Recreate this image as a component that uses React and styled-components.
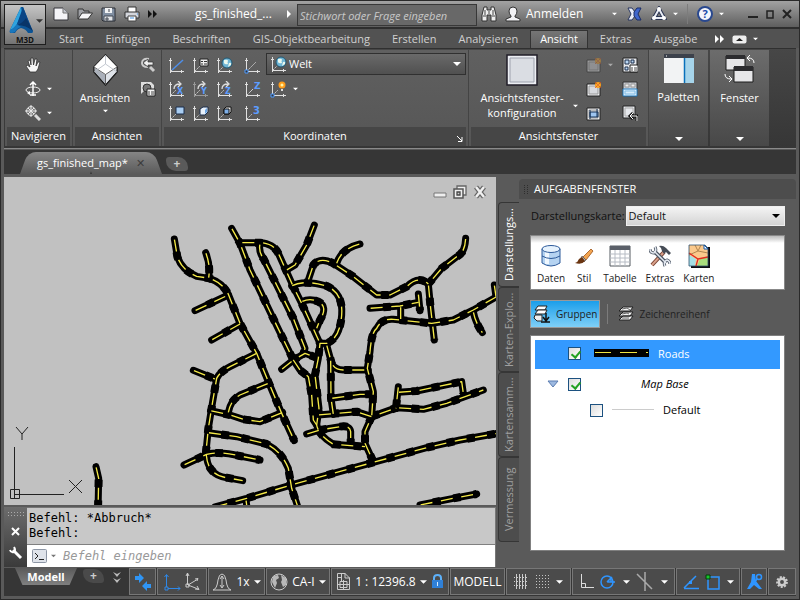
import * as React from 'react';
import styled, { createGlobalStyle, css } from 'styled-components';

const GlobalStyle = createGlobalStyle`
    * { box-sizing: border-box; }
    body {
        margin: 0;
        background: #5a5a5a;
        font-family: "Open Sans", "Noto Sans", sans-serif;
        font-size: 11px;
        line-height: 16px;
        color: #fff;
    }
    button, input, select { font: inherit; color: inherit; }
    svg { display: block; flex: none; }
`;

/* ---------- small icons ---------- */

const Icon = ({w = 16, h = 16, box, children}) => (
    <svg width={w} height={h} viewBox={box || `0 0 ${w} ${h}`} fill="none" aria-hidden="true">{children}</svg>
);

const Arrow = ({w = 7, color = '#fff'}) => (
    <Icon w={w} h={4} box="0 0 8 4"><path d="M0 0H8L4 4Z" fill={color}/></Icon>
);

const DoubleArrow = ({color = '#fff'}) => (
    <Icon w={9} h={8}><path d="M0 0L4 4L0 8ZM5 0L9 4L5 8Z" fill={color}/></Icon>
);

const LogoIcon = () => (
    <Icon w={25} h={27}>
        <path d="M12 0L1 23Q0 26 2 26L6 26Q8 22 12 21Q17 22 19 26L23 26Q25 25 23 22L14 0Z" fill="#0b5496"/>
        <path d="M12 0L1 23Q5 22 8 17L13 6Z" fill="#2fa3df"/>
        <path d="M13 3L8 17Q14 15 23 23L14 0Z" fill="#0a4585"/>
        <path d="M8 17Q4 22 1 23Q0 26 3 26L6 25Q8 21 12 20Z" fill="#1877bd"/>
        <path d="M17 11L24 24Q17 18 8 18Q14 16 17 11Z" fill="#083569"/>
    </Icon>
);

const NewIcon = () => (
    <Icon><path d="M1 2H10L15 7V14H1Z" fill="#f4f4f8" stroke="#35353b"/><path d="M10 2V7H15" fill="#c4c7d0" stroke="#777"/></Icon>
);
const OpenIcon = () => (
    <Icon><path d="M1 13V3H6L7 5H12V7" fill="#9fa1a6" stroke="#333"/><path d="M1 13L5 7H15.500L11 13Z" fill="#f5f5f7" stroke="#333"/></Icon>
);
const SaveIcon = () => (
    <Icon w={15} h={15}><path d="M1 1H14V14H2L1 13Z" fill="#8290a3" stroke="#2a2d33"/><path d="M4 1H11V6H4Z" fill="#f2f3f5"/><path d="M3 9H12V14H3Z" fill="#e4e6ea" stroke="#404650"/><path d="M8 2V5M5 11H7V13H5Z" stroke="#404650"/></Icon>
);
const PrintIcon = () => (
    <Icon><path d="M4 6V1H12V6" fill="#fff" stroke="#333"/><path d="M1 6H15V12H1Z" fill="#d4d6dc" stroke="#333"/><path d="M4 10H12V15H4Z" fill="#fff" stroke="#444"/><path d="M6 12H10M13 8H14" stroke="#3f8fe0"/></Icon>
);
const BinocularIcon = () => (
    <Icon><path d="M3 1H6V4H10V1H13L15 9V15H10V9H6V15H1V9Z" fill="#eee" stroke="#333"/><path d="M2 10H5M11 10H14M4 4V9M12 4V9M8 5V8" stroke="#444"/></Icon>
);
const UserIcon = () => (
    <Icon><path d="M8 1Q12 1 12 5Q12 8 10 10V11L15 13V15H1V13L6 11V10Q4 8 4 5Q4 1 8 1Z" fill="#f1f1f4" stroke="#333"/></Icon>
);
const ExchangeIcon = () => (
    <Icon w={15} h={14}><path d="M1 1H5L8 5V9L5 13H1L4 7Z" fill="#e9edf8" stroke="#27355f"/><path d="M14 1H10L7 5V9L10 13H14L11 7Z" fill="#3f66cc" stroke="#1b2c66"/></Icon>
);
const AppsIcon = () => (
    <Icon><path d="M8 3L3 12H13Z" stroke="#2b3552" strokeWidth="4"/><path d="M8 3L3 12H13Z" stroke="#e8ecf5" strokeWidth="2"/><circle cx="8" cy="3" r="2" fill="#fff"/><circle cx="3" cy="12" r="2" fill="#fff"/><circle cx="13" cy="12" r="2" fill="#fff"/></Icon>
);

const HandIcon = () => (
    <Icon><path d="M5 15L1 9L2 8L5 10L3 4L5 3L6 8L6 1L8 1L8.500 8L10 2L12 2L11 9L13 5L15 5L13 12L11 15Z" fill="#f6f6f6" stroke="#333" strokeWidth=".8"/></Icon>
);
const OrbitIcon = () => (
    <Icon><ellipse cx="8" cy="9" rx="7" ry="3" stroke="#eee"/><path d="M8 15V2M5 4L8 1L11 4M5 14H11" stroke="#fff" strokeWidth="1.500"/><path d="M2 12L5 10V14Z" fill="#fff"/></Icon>
);
const ZoomIcon = () => (
    <Icon><circle cx="6" cy="6" r="4.500" fill="#777" stroke="#ddd"/><path d="M6 0V12M0 6H12M3 3L9 9M9 3L3 9" stroke="#e9e9e9"/><path d="M10 10L15 15" stroke="#ddd" strokeWidth="3"/></Icon>
);
const CubeIcon = () => (
    <Icon w={25} h={32}>
        <path d="M12.500 1L24 13V18L12.500 31L1 18V13Z" fill="#f0f2f5" stroke="#1d1d1d" strokeWidth="1.500"/>
        <path d="M12.500 1L24 13L12.500 20L1 13Z" fill="#fff"/>
        <path d="M1.500 14L12.500 21V30L2 18Z" fill="#aab0ba"/>
        <path d="M23.500 14L12.500 21V30L23 18Z" fill="#dfe3e9"/>
        <path d="M1 13L12.500 20.500L24 13M12.500 20.500V31" stroke="#555" strokeWidth=".9"/>
        <path d="M12.500 1V10L1 18M12.500 10L24 18" stroke="#b4bac4" strokeWidth=".8"/>
    </Icon>
);
const BackZoomIcon = () => (
    <Icon><path d="M9 2Q2 1 2 6Q2 10 8 10" stroke="#ccc" strokeWidth="2"/><path d="M3 6L8 2V5H13V8H8V10Z" fill="#f2f2f2" stroke="#333" strokeWidth=".7"/><path d="M10 10L14 14" stroke="#ccc" strokeWidth="3"/></Icon>
);
const ViewManagerIcon = () => (
    <Icon><path d="M1 1H11L14 4V9H5L1 13Z" fill="#ddd"/><circle cx="7" cy="7" r="4" fill="#777" stroke="#333"/><path d="M7 8H15V15H7Z" fill="#f5f5f5" stroke="#222"/><path d="M8 11H10M11 11H14M8 13H10M11 13H14" stroke="#444"/></Icon>
);

const Axis = ({children, dim}) => (
    <Icon w={17} h={17}>
        <g stroke={dim ? '#999' : '#e0e0e0'} shapeRendering="crispEdges">
            <path d="M2.500 16V1M2 14.500H16"/><path d="M1 3.500H4M13.500 13V16"/>
        </g>
        <path d="M3 14L8 9" stroke="#ccc" strokeDasharray="2 1"/>
        {children}
    </Icon>
);
const Globe = ({x = 11, y = 6}) => (
    <g><circle cx={x} cy={y} r="5" fill="#6fb5d5" stroke="#21566f"/><path d={`M${x - 3} ${y - 3}q4 -1 4 1q-1 1 0 3q-3 1 -4 -1zM${x + 2} ${y}q3 -1 2 2l-3 2z`} fill="#eaf8ee"/></g>
);
const AxisLetter = ({children}) => (
    <text x="9" y="13" fill="#5c9dff" fontSize="8" fontWeight="bold" fontFamily="DejaVu Sans">{children}</text>
);
const Turn = () => <path d="M6 8Q6 3 12 3M10 0L13 3L10 6" stroke="#ddd" strokeWidth="1.300"/>;

const coordIcons = [
    ['BKS', <Axis><path d="M4 13L15 3" stroke="#4e8ee8" strokeWidth="1.500"/></Axis>],
    ['BKS benannt', <Axis><path d="M8 2H16V9H8Z" fill="#eee" stroke="#222"/><path d="M9 4.500H11M12 4.500H15M9 7H11M12 7H15" stroke="#333"/></Axis>],
    ['BKS Welt', <Axis><Globe/></Axis>],
    ['BKS Ursprung', <Axis><path d="M7 10L12 5" stroke="#aaa"/><path d="M1 13H4V16H1Z" fill="#333" stroke="#4e9bff"/></Axis>],
    ['BKS X', <Axis><Turn/><AxisLetter>X</AxisLetter></Axis>],
    ['BKS Y', <Axis dim><Turn/><AxisLetter>Y</AxisLetter></Axis>],
    ['BKS Z', <Axis><Turn/><AxisLetter>Z</AxisLetter></Axis>],
    ['Z-Achse', <Axis><path d="M6 11L9 8" stroke="#ccc"/><text x="10" y="8" fill="#5c9dff" fontSize="9" fontWeight="bold" fontFamily="DejaVu Sans">Z</text></Axis>],
    ['BKS Ansicht', <Axis><path d="M8 2H16V9H8Z" fill="#a9cdf2" stroke="#1a2c4a"/></Axis>],
    ['BKS Objekt', <Axis><path d="M8 4L11 2H16V7L13 10H8Z" fill="#e8f1fb" stroke="#1a2c4a"/><path d="M13 5V9L15 7V3Z" fill="#6ba6e6"/></Axis>],
    ['BKS Fläche', <Axis><path d="M8 4L10 2H15V7L13 9H8Z" fill="#eee" stroke="#111"/><path d="M8 4H13V9H8Z" fill="#7eafe8" stroke="#111"/></Axis>],
    ['BKS 3 Punkte', <Axis><text x="9" y="9" fill="#5c9dff" fontSize="10" fontWeight="bold" fontFamily="DejaVu Sans">3</text></Axis>],
];

const Spark = ({x, y}) => (
    <g><circle cx={x} cy={y} r="3" fill="#f9a01b"/><circle cx={x} cy={y} r="1.300" fill="#fff36b"/><path d={`M${x - 3} ${y - 3}l6 6M${x + 3} ${y - 3}l-6 6`} stroke="#d9441d" strokeWidth=".7"/></g>
);
const ViewportIcon = ({spark, faded, inner}) => (
    <Icon><g opacity={faded ? .4 : 1}><path d="M1 3H14V15H1Z" fill="#f2f3f5" stroke="#222"/><path d="M3 5H12V13H3Z" fill="#d8dade" stroke="#999"/>{inner && <path d="M4 7H12V12H4ZM4 5V14M11 4V12" fill="#9ec5f0" stroke="#153055"/>}{spark && <Spark x={12} y={4}/>}</g></Icon>
);
const NamedViewsIcon = () => (
    <Icon><path d="M1 1H15V15H1Z" fill="#e6e8ec" stroke="#222"/><path d="M3 3H7V7H3ZM9 3H12V6H9ZM3 10H6V13H3Z" fill="#b9d6f4" stroke="#1d2f4a"/><path d="M8 8H16V15H8Z" fill="#fff" stroke="#222"/><path d="M9 11H11M12 11H15M9 13H11M12 13H15" stroke="#444"/></Icon>
);
const JoinIcon = () => (
    <Icon><path d="M1 1H15V15H1Z" fill="#c9ccd2" stroke="#333"/><path d="M3 3H7V6H3ZM9 3H13V6H9Z" fill="#eee" stroke="#999"/><path d="M1 8H15V15H1Z" fill="#d7ecfb" stroke="#2b82c5"/><path d="M3 10H13V13H3Z" stroke="#82bde6"/></Icon>
);
const RestoreIcon = () => (
    <Icon><path d="M1 1H13V13H1Z" fill="#e6e8ec" stroke="#222"/><path d="M3 3H11V11H3Z" stroke="#aaa"/><path d="M15 16V11H9M11 8L8 11L11 14" stroke="#111" strokeWidth="3"/><path d="M15 16V11H9M11 8L8 11L11 14" stroke="#fff"/></Icon>
);
const BigViewportIcon = () => (
    <Icon w={32} h={32}><path d="M1 1H31V31H1Z" fill="#eceef3" stroke="#211e29" strokeWidth="1.500"/><path d="M4 4H28V28H4Z" fill="#dadde3" stroke="#9da1ad"/></Icon>
);
const PalettesIcon = () => (
    <Icon w={30} h={29}><path d="M0 0H30V29H0Z" fill="#f2f3f4"/><path d="M20 3H30V29H20Z" fill="#a6d4ea"/><path d="M20.500 3V29" stroke="#0870bb" strokeWidth="1.500"/><path d="M0 0H30V4H0Z" fill="#3c414b"/><path d="M2 2H3" stroke="#fff"/></Icon>
);
const WindowsIcon = () => (
    <Icon w={32} h={30}><path d="M2 2H21V16H2Z" fill="#e6e6e8" stroke="#1c1c1c"/><path d="M2 1H21V5H2Z" fill="#2c2c2f"/><path d="M10 13H29V28H10Z" fill="#e6e6e8" stroke="#1c1c1c"/><path d="M10 12H29V17H10Z" fill="#2c2c2f"/><path d="M30 9Q30 4 24 4M26 1L23 4L26 7M1 20Q1 25 7 25M5 22L8 25L5 28" stroke="#fff"/></Icon>
);

const DataIcon = () => (
    <Icon w={22} h={24}><path d="M2 5V19Q11 25 20 19V5Z" fill="#b5d3f1" stroke="#2d5a9a"/><path d="M5 6V20H9V7Z" fill="#f0f8ff"/><ellipse cx="11" cy="5" rx="9" ry="3.500" fill="#e6f2fd" stroke="#2d5a9a"/><path d="M2 12Q11 17 20 12" stroke="#2d5a9a"/></Icon>
);
const BrushIcon = () => (
    <Icon w={20} h={24}><path d="M9 13L17 5L19 7L12 16Z" fill="#f3a552" stroke="#9b5216" strokeWidth=".8"/><path d="M8 12L12 16L10 18L7 14Z" fill="#bbb" stroke="#444" strokeWidth=".6"/><path d="M1 19Q4 18 5 15L8 13L11 17Q8 21 1 19Z" fill="#6a3410"/></Icon>
);
const TableIcon = () => (
    <Icon w={22} h={24}><path d="M1 2H21V22H1Z" fill="#fff" stroke="#555a60"/><path d="M1 2H21V6H1Z" fill="#5a5f68"/><path d="M1 10H21M1 14H21M1 18H21M6 6V22M11 6V22M16 6V22" stroke="#b7bcc4"/></Icon>
);
const ToolsIcon = () => (
    <Icon w={22} h={24}><path d="M3 21L15 8" stroke="#7a4433" strokeWidth="4"/><path d="M3 21L15 8" stroke="#d9a08a" strokeWidth="2"/><path d="M10 2Q14 1 17 4L22 9L20 11L17 8L15 10L13 7Q13 4 10 2Z" fill="#454b55"/><path d="M5 7L17 19" stroke="#4b5563" strokeWidth="4"/><path d="M1 5Q1 9 5 9Q8 7 6 3M16 22Q14 18 18 16Q21 17 21 20" stroke="#4b5563" strokeWidth="3"/><path d="M5 7L17 19M1 5Q1 9 5 9Q8 7 6 3M16 22Q14 18 18 16Q21 17 21 20" stroke="#e3e8f0" strokeWidth="1.500"/></Icon>
);
const MapIcon = () => (
    <Icon w={22} h={24}><path d="M3 3H22V24H3Z" fill="#0e0e12"/><path d="M1 1H17L20 4V22H1Z" fill="#fbc98c"/><path d="M1 11L8 15L7 22H1Z" fill="#a5dfe6"/><path d="M12 15L20 12V22H9Z" fill="#a9dd7d"/><path d="M7 1L10 7L1 11M10 7L20 9M13 1L10 7" stroke="#b2864f"/><path d="M1 9L10 15L20 13M10 15L8 22" stroke="#e12b21" strokeWidth="1.300"/><path d="M1 1H17L20 4V22H1Z" stroke="#31506e" strokeWidth=".8"/><path d="M16 1V5H20Z" fill="#fff" stroke="#1458a8"/></Icon>
);
const GroupsIcon = () => (
    <Icon w={18} h={18}><path d="M5 1H14L12 5H2Z" fill="#fff" stroke="#222"/><path d="M5 5H14L12 9H2Z" fill="#fff" stroke="#222"/><path d="M2 10H9V16H4L1 13Z" fill="#eee" stroke="#222"/><path d="M13 8V15M10 12L13 16L16 12M8 17H17" stroke="#111" strokeWidth="1.500"/></Icon>
);
const LayersIcon = () => (
    <Icon><path d="M5 10H15L12 14H1ZM5 6H15L12 10H1ZM5 1H15L12 5H1Z" fill="#f1f1f1" stroke="#222"/><path d="M4 3L9 2L12 4M4 8L9 7L11 8M4 12H11" stroke="#666"/></Icon>
);
const WrenchIcon = () => (
    <Icon w={14} h={14}><path d="M4 4L12 12" stroke="#fff" strokeWidth="3"/><path d="M1 4Q2 7 5 6Q7 4 5 1" stroke="#fff" strokeWidth="2"/></Icon>
);

/* status bar icons */
const SwapIcon = () => (
    <Icon w={18} h={18}><path d="M1 3H5V0L10 5L5 10V7H1ZM17 11H13V8L8 13L13 18V15H17Z" fill="#2f95f5"/></Icon>
);
const UcsIcon = () => (
    <Icon w={18} h={18}><path d="M3.500 14V2M5 15.500H17M1.500 4L3.500 1.500L5.500 4M15 13.500L17 15.500L15 17.500M2 14H5V17H2Z" stroke="#2e88e8"/></Icon>
);
const IsoIcon = () => (
    <Icon w={16} h={19}><path d="M2.500 13V1M3 13L13 7M3 13L13 17M1 4L2.500 1L4 4M10 7L13 6.500L12 9M10 17L14 17.500L12 14M1 12H4V15H1Z" stroke="#ccc"/></Icon>
);
const ScaleIcon = () => (
    <Icon w={20} h={20}><path d="M1 18Q5 17 6 8Q7 2 10 2Q13 2 14 8Q15 17 19 18Z" stroke="#ccc"/><path d="M10 4V15M8 7L10 4L12 7M8 13L10 16L12 13" stroke="#ccc"/></Icon>
);
const WorldIcon = () => (
    <Icon w={18} h={18}><circle cx="9" cy="9" r="8" stroke="#ccc"/><path d="M3 3L8 2L9 5L6 7L7 10L5 15L2 9ZM11 2L16 5L16 12L13 14L11 9L12 7Z" fill="#b8b8b8"/></Icon>
);
const SheetIcon = () => (
    <Icon w={15} h={19}><path d="M1.500 1.500H9L13.500 6V17.500H1.500ZM9 1V6H14M1 5.500H6M5.500 1V10M4 9.500H11V15.500H4ZM7.500 8V17M2 12.500H13" stroke="#ccc"/></Icon>
);
const LockIcon = () => (
    <Icon w={13} h={15}><path d="M3 7V4Q3 1 6.500 1Q10 1 10 4V7" stroke="#5db0f8" strokeWidth="2"/><path d="M1 6H12V14H1Z" fill="#2f80d8"/><path d="M6.500 8V12" stroke="#d5eaff"/></Icon>
);
const GridIcon = () => (
    <Icon w={15} h={15}><path d="M2.500 0V15M5.500 0V15M8.500 0V15M11.500 0V15" stroke="#ccc"/><path d="M0 3.500H15M0 7.500H15M0 11.500H15" stroke="#ccc" strokeDasharray="1 2"/></Icon>
);
const DotsIcon = () => (
    <Icon w={14} h={14}>{[1, 4, 7, 10, 13].map(y => <path key={y} d={`M0 ${y - .5}H14`} stroke="#c4c4c4" strokeDasharray="1 2"/>)}</Icon>
);
const OrthoIcon = () => (
    <Icon w={14} h={15}><path d="M1.500 0V13.500H14M1.500 9.500H5.500V13.500" stroke="#ddd"/></Icon>
);
const PolarIcon = () => (
    <Icon w={16} h={16}><circle cx="7" cy="8" r="6" stroke="#2f95ff" strokeWidth="1.500"/><path d="M7 8L12 3M7 8H15M11 8V5" stroke="#2f95ff" strokeWidth="1.500"/></Icon>
);
const IsoDraftIcon = () => (
    <Icon w={18} h={20}><path d="M1 2L16 17M9 0V19" stroke="#aaa" strokeWidth="1.500"/></Icon>
);
const TrackIcon = () => (
    <Icon w={17} h={16}><path d="M1 14.500H16M1 14L13 2" stroke="#2f95ff" strokeWidth="1.500"/><path d="M6 7H9V10H6Z" fill="#2f95ff"/></Icon>
);
const SnapIcon = () => (
    <Icon w={16} h={16}><path d="M3 3H14V15H3Z" stroke="#2f95ff" strokeWidth="1.500"/><path d="M1 1H5V5H1Z" fill="#17c52b" stroke="#053d08"/></Icon>
);
const AnnoIcon = () => (
    <Icon w={17} h={18}><path d="M6 1L9 1L10 8L16 16L13 16L8 12L4 16L1 16L5 9Z" fill="#2f95ff"/><circle cx="13" cy="4" r="2.500" stroke="#2f95ff" strokeWidth="1.500"/><path d="M11 6L8 10" stroke="#2f95ff" strokeWidth="1.500"/></Icon>
);
const GearIcon = () => (
    <Icon w={12} h={12}><circle cx="6" cy="6" r="4.800" stroke="#ccc" strokeWidth="2.200" strokeDasharray="2 1.300"/><circle cx="6" cy="6" r="3.200" stroke="#ccc" strokeWidth="2.500"/></Icon>
);

/* ---------- title bar and ribbon tabs ---------- */

const TitleBar = ({docName}) => (
    <TitleRow>
        <QuickAccess>
            <IconButton aria-label="Neu"><NewIcon/></IconButton>
            <IconButton aria-label="Öffnen"><OpenIcon/></IconButton>
            <IconButton aria-label="Speichern"><SaveIcon/></IconButton>
            <IconButton aria-label="Drucken"><PrintIcon/></IconButton>
            <IconButton aria-label="Mehr"><DoubleArrow color="#111"/></IconButton>
        </QuickAccess>
        <DocName>{docName}</DocName>
        <Icon w={4} h={8}><path d="M0 0L4 4L0 8Z" fill="#fff"/></Icon>
        <Search type="text" placeholder="Stichwort oder Frage eingeben" aria-label="Suche"/>
        <IconButton aria-label="Suchen"><BinocularIcon/></IconButton>
        <SignIn><UserIcon/><span>Anmelden</span><Arrow w={5}/></SignIn>
        <TitleTools>
            <IconButton aria-label="Exchange"><ExchangeIcon/></IconButton>
            <IconButton aria-label="Apps"><AppsIcon/><Arrow w={5}/></IconButton>
            <Divider/>
            <IconButton aria-label="Hilfe"><HelpMark>?</HelpMark><Arrow w={5}/></IconButton>
        </TitleTools>
        <WindowButtons>
            <IconButton aria-label="Minimieren"><Icon w={10} h={10}><path d="M0 8H10" stroke="#222" strokeWidth="2"/></Icon></IconButton>
            <IconButton aria-label="Maximieren"><Icon w={8} h={10}><path d="M1 2H7V9H1Z" stroke="#222" strokeWidth="1.500"/></Icon></IconButton>
            <IconButton aria-label="Schließen"><Icon w={10} h={10}><path d="M1 1L9 9M9 1L1 9" stroke="#222" strokeWidth="2"/></Icon></IconButton>
        </WindowButtons>
    </TitleRow>
);

const ribbonTabs = ['Start', 'Einfügen', 'Beschriften', 'GIS-Objektbearbeitung', 'Erstellen', 'Analysieren', 'Ansicht', 'Extras', 'Ausgabe'];

const RibbonTabs = ({active, onPick}) => (
    <TabRow>
        {ribbonTabs.map(name => (
            <RibbonTab key={name} $active={name === active} onClick={() => onPick(name)}>{name}</RibbonTab>
        ))}
        <IconButton aria-label="Weitere Register"><DoubleArrow/></IconButton>
        <IconButton aria-label="Ribbon minimieren">
            <Icon w={15} h={9}><rect x=".5" y=".5" width="14" height="8" rx="2" fill="#eee"/><path d="M4 6H11L7.500 3Z" fill="#222"/></Icon>
            <Arrow w={5}/>
        </IconButton>
    </TabRow>
);

/* ---------- ribbon ---------- */

const Ribbon = () => (
    <RibbonBar>
        <Panel $width={68}>
            <PanelBody>
                <ToolColumn>
                    <IconButton aria-label="Pan"><HandIcon/></IconButton>
                    <IconButton aria-label="Orbit"><OrbitIcon/><Arrow w={5}/></IconButton>
                    <IconButton aria-label="Zoom"><ZoomIcon/><Arrow w={5}/></IconButton>
                </ToolColumn>
            </PanelBody>
            <PanelTitle>Navigieren</PanelTitle>
        </Panel>
        <Panel $width={89}>
            <PanelBody>
                <BigButton><CubeIcon/><span>Ansichten</span><Arrow w={5}/></BigButton>
                <ToolColumn>
                    <IconButton aria-label="Vorherige Ansicht"><BackZoomIcon/></IconButton>
                    <IconButton aria-label="Ausschnitt"><ViewManagerIcon/></IconButton>
                </ToolColumn>
            </PanelBody>
            <PanelTitle>Ansichten</PanelTitle>
        </Panel>
        <Panel $width={307}>
            <CoordBody>
                <CoordGrid>
                    {coordIcons.map(([label, icon]) => <IconButton key={label} aria-label={label}>{icon}</IconButton>)}
                </CoordGrid>
                <CoordSide>
                    <UcsField>
                        <Axis><Globe/></Axis>
                        <select aria-label="Koordinatensystem" defaultValue="Welt"><option>Welt</option></select>
                        <Arrow w={8}/>
                    </UcsField>
                    <IconButton aria-label="BKS-Symbol">
                        <Axis><path d="M1 13H4V16H1Z" fill="#333" stroke="#4e9bff"/><circle cx="12" cy="4" r="3.500" fill="#ff9c1a"/><circle cx="12" cy="4" r="1.500" fill="#fff6a8"/><path d="M11 8H13V10H11Z" fill="#ddd"/></Axis>
                        <Arrow w={5}/>
                    </IconButton>
                </CoordSide>
            </CoordBody>
            <PanelTitle>
                Koordinaten
                <Launcher aria-label="Dialogfeld Koordinaten"><Icon w={6} h={6}><path d="M0 0L5 5M5 1V5.500H1" stroke="#fff"/></Icon></Launcher>
            </PanelTitle>
        </Panel>
        <Panel $width={180}>
            <PanelBody>
                <BigButton $wide><BigViewportIcon/><span>Ansichtsfenster-<br/>konfiguration</span></BigButton>
                <Arrow w={5}/>
                <ToolColumn>
                    <IconButton aria-label="Neues Fenster" disabled><ViewportIcon spark faded/><Arrow w={5} color="#aaa"/></IconButton>
                    <IconButton aria-label="Rechteckig"><ViewportIcon spark/></IconButton>
                    <IconButton aria-label="Zuschneiden"><ViewportIcon inner/></IconButton>
                </ToolColumn>
                <ToolColumn>
                    <IconButton aria-label="Benannt"><NamedViewsIcon/></IconButton>
                    <IconButton aria-label="Verbinden"><JoinIcon/></IconButton>
                    <IconButton aria-label="Wiederherstellen"><RestoreIcon/></IconButton>
                </ToolColumn>
            </PanelBody>
            <PanelTitle>Ansichtsfenster</PanelTitle>
        </Panel>
        <FoldedPanel><PalettesIcon/><span>Paletten</span><Arrow w={8}/></FoldedPanel>
        <FoldedPanel><WindowsIcon/><span>Fenster</span><Arrow w={8}/></FoldedPanel>
    </RibbonBar>
);

/* ---------- drawing ---------- */

const roads = [
    'M43 72L52 125Q65 165 110 184L148 190Q188 203 205 238L240 325L290 415L325 500L365 595L403 677',
    'M137 113Q152 150 146 188',
    'M105 287L205 240',
    'M155 375L240 327',
    'M290 415L210 455Q180 470 170 490L158 560L145 640L138 710Q140 750 155 765Q170 785 200 788L248 797',
    'M100 466L165 492',
    'M325 505L240 540Q212 555 205 592',
    'M152 587L210 600L250 613L300 620L368 592',
    'M145 653L230 665L320 687Q365 710 385 760L395 820L415 880',
    'M72 750L140 718Q180 708 240 723L300 735',
    'M165 876L260 850L400 808L640 742L800 698L900 675L1030 652',
    'M258 855L262 885',
    'M780 870L880 850L950 837',
    'M-192 755L-184 790L-186 890',
    'M215 40L240 85L270 165L330 290L400 435L420 465L445 485L455 540L460 615L470 630',
    'M245 83H300Q340 85 355 115L400 215L425 265L480 385',
    'M300 87Q295 110 310 130L350 210L400 310L435 400L430 418',
    'M463 30L440 90L405 150L380 165',
    'M445 195L460 150Q480 125 520 145L580 185L650 240H690L740 215Q775 180 805 207',
    'M600 87Q545 100 530 145',
    'M917 70Q915 115 890 125L845 160L805 207L812 280L823 375',
    'M395 213Q430 193 500 213Q550 235 545 300Q540 370 500 385H480L475 430L465 480L477 580L470 630Q475 660 520 688L615 695',
    'M425 260Q450 248 475 260Q505 275 480 315L470 340',
    'M500 390L515 445Q525 465 550 465H625',
    'M512 435L513 550L520 598',
    'M365 463L400 435L435 415L470 428',
    'M515 550L600 538H640',
    'M475 600L590 590L635 605L710 578L790 583L860 565L970 525',
    'M715 515L708 580',
    'M715 532L770 528L905 500L910 535',
    'M1010 245L940 285L880 315L815 325L700 313Q665 310 650 340Q635 350 630 410L622 460L640 530L635 605L615 650V685L640 740',
    'M630 280L720 273L775 262M775 237L780 287M722 275V312',
    'M940 290Q945 320 967 353',
    'M1003 210L1008 245',
    'M440 657L480 645L540 635Q570 630 572 650V690',
];

const Drawing = () => (
    <DrawingArea>
        <RoadMap viewBox="-468 -114 1476 984" preserveAspectRatio="xMidYMid slice" role="img" aria-label="Straßenkarte">
            <g stroke="#000" strokeWidth="21">{roads.map(d => <path key={d} d={d}/>)}</g>
            <g stroke="#000" strokeWidth="24" strokeDasharray="22 40" strokeDashoffset="22" strokeLinecap="butt">{roads.map(d => <path key={d} d={d}/>)}</g>
            <g stroke="#f5ea48" strokeWidth="4" strokeDasharray="36 26" strokeDashoffset="-2" strokeLinecap="butt">{roads.map(d => <path key={d} d={d}/>)}</g>
        </RoadMap>
        <ViewButtons>
            <IconButton aria-label="Ansicht minimieren"><Icon w={14} h={14}><path d="M1 8H13V12H1Z" fill="#eee" stroke="#777"/></Icon></IconButton>
            <IconButton aria-label="Ansicht wiederherstellen"><Icon w={14} h={14}><path d="M4 1H13V10H4Z" fill="#eee" stroke="#666" strokeWidth="1.300"/><path d="M1 4H10V13H1Z" fill="#eee" stroke="#555" strokeWidth="1.500"/><path d="M4 7H7V10H4Z" fill="#ccc" stroke="#444" strokeWidth="1.300"/></Icon></IconButton>
            <IconButton aria-label="Ansicht schließen"><Icon w={14} h={14}><path d="M3 2L11 12M11 2L3 12" stroke="#666" strokeWidth="5"/><path d="M3 2L11 12M11 2L3 12" stroke="#f0f0f0" strokeWidth="2.500"/></Icon></IconButton>
        </ViewButtons>
        <UcsMark>
            <Icon w={80} h={76}>
                <path d="M6.500 71V20M6 67.500H56M2.500 62.500H11.500V71.500H2.500ZM61 53L74 66M74 53L61 66M8 0L14 7L20 0M14 7V13" stroke="#222"/>
            </Icon>
        </UcsMark>
    </DrawingArea>
);

const CommandLine = () => (
    <Command>
        <CommandStrip>
            <Grip/>
            <IconButton aria-label="Befehlszeile schließen"><Icon w={9} h={9}><path d="M1 1L8 8M8 1L1 8" stroke="#fff" strokeWidth="2"/></Icon></IconButton>
            <IconButton aria-label="Anpassen"><WrenchIcon/></IconButton>
        </CommandStrip>
        <CommandMain>
            <History>Befehl: *Abbruch*<br/>Befehl:</History>
            <Prompt>
                <Icon w={15} h={14}><rect x=".5" y=".5" width="14" height="13" rx="1" fill="#dfe3ea" stroke="#8d96a5"/><path d="M3 4L6 7L3 10M7 10.500H12" stroke="#222"/></Icon>
                <Arrow w={5} color="#777"/>
                <input type="text" placeholder="Befehl eingeben" aria-label="Befehl eingeben"/>
            </Prompt>
        </CommandMain>
    </Command>
);

/* ---------- task pane ---------- */

const sideTabs = ['Darstellungs...', 'Karten-Explo...', 'Kartensamm...', 'Vermessung'];
const paneTools = [
    ['Daten', DataIcon],
    ['Stil', BrushIcon],
    ['Tabelle', TableIcon],
    ['Extras', ToolsIcon],
    ['Karten', MapIcon],
];

const TaskPane = () => {
    const [side, setSide] = React.useState(sideTabs[0]);
    return (
        <Pane>
            <SideTabs>
                {sideTabs.map(name => <SideTab key={name} $active={name === side} onClick={() => setSide(name)}>{name}</SideTab>)}
            </SideTabs>
            <PaneMain>
                <PaneHeader><PaneGrip/>AUFGABENFENSTER</PaneHeader>
                <PaneBody>
                    <MapField>
                        <label htmlFor="displayMap">Darstellungskarte:</label>
                        <div>
                            <select id="displayMap" defaultValue="Default"><option>Default</option></select>
                            <Arrow w={8} color="#000"/>
                        </div>
                    </MapField>
                    <PaneToolbar>
                        {paneTools.map(([name, ToolIcon]) => <PaneTool key={name}><ToolIcon/>{name}</PaneTool>)}
                    </PaneToolbar>
                    <OrderRow>
                        <OrderButton $active><GroupsIcon/>Gruppen</OrderButton>
                        <Divider/>
                        <OrderButton><LayersIcon/>Zeichenreihenf</OrderButton>
                    </OrderRow>
                    <LayerList>
                        <LayerRow $selected>
                            <Check type="checkbox" id="roads" defaultChecked/>
                            <Icon w={55} h={8}><path d="M0 0H55V8H0Z" fill="#000"/><path d="M1 3.500H17M26 3.500H43M52 3.500H54" stroke="#f0e442"/></Icon>
                            <label htmlFor="roads">Roads</label>
                        </LayerRow>
                        <LayerRow>
                            <Expander aria-label="Map Base zuklappen"><Icon w={12} h={8}><path d="M1 1H11L6 7Z" fill="#9db9e0" stroke="#5b7db1"/></Icon></Expander>
                            <Check type="checkbox" id="mapBase" defaultChecked/>
                            <BaseLabel htmlFor="mapBase">Map Base</BaseLabel>
                        </LayerRow>
                        <LayerRow $child>
                            <Check type="checkbox" id="default"/>
                            <Icon w={42} h={2}><path d="M0 .5H42" stroke="#ccc"/></Icon>
                            <label htmlFor="default">Default</label>
                        </LayerRow>
                    </LayerList>
                </PaneBody>
            </PaneMain>
        </Pane>
    );
};

/* ---------- status bar ---------- */

const StatusBar = () => (
    <Status>
        <LayoutTabs>
            <LayoutTab>Modell</LayoutTab>
            <AddLayout aria-label="Neues Layout">+</AddLayout>
            <IconButton aria-label="Weitere Layouts"><Icon w={8} h={12}><path d="M0 0L4 2L8 0L4 5ZM0 6L4 8L8 6L4 11Z" fill="#bbb"/></Icon></IconButton>
        </LayoutTabs>
        <StatusCell $width={27}><IconButton aria-label="Synchronisieren"><SwapIcon/></IconButton></StatusCell>
        <StatusCell $width={50}><IconButton aria-label="BKS"><UcsIcon/></IconButton><IconButton aria-label="Isometrisch"><IsoIcon/></IconButton></StatusCell>
        <StatusCell $width={57}><StatusButton><ScaleIcon/>1x<Arrow/></StatusButton></StatusCell>
        <StatusCell $width={64}><StatusButton><WorldIcon/>CA-I<Arrow/></StatusButton></StatusCell>
        <StatusCell $width={118}><StatusButton><SheetIcon/>1 : 12396.8<Arrow/></StatusButton><IconButton aria-label="Sperren"><LockIcon/></IconButton></StatusCell>
        <StatusCell $width={55}><StatusButton>MODELL</StatusButton></StatusCell>
        <StatusCell $width={65}><IconButton aria-label="Raster"><GridIcon/></IconButton><IconButton aria-label="Fang"><DotsIcon/></IconButton><Arrow/></StatusCell>
        <StatusCell $width={103}>
            <IconButton aria-label="Ortho"><OrthoIcon/></IconButton>
            <IconButton aria-label="Spurverfolgung"><PolarIcon/></IconButton><Arrow/>
            <IconButton aria-label="Isoebene"><IsoDraftIcon/></IconButton><Arrow/>
        </StatusCell>
        <StatusCell $width={64}><IconButton aria-label="Objektfangspur"><TrackIcon/></IconButton><IconButton aria-label="Objektfang"><SnapIcon/></IconButton><Arrow/></StatusCell>
        <StatusCell $width={26}><IconButton aria-label="Beschriftung"><AnnoIcon/></IconButton></StatusCell>
        <StatusCell $grow $width={27}><IconButton aria-label="Einstellungen"><GearIcon/></IconButton></StatusCell>
    </Status>
);

const App = () => {
    const [tab, setTab] = React.useState('Ansicht');
    return (
        <Frame>
            <GlobalStyle/>
            <Header>
                <AppButton aria-label="Anwendungsmenü"><LogoIcon/><Arrow w={7} color="#333"/><b>M3D</b></AppButton>
                <TitleBar docName="gs_finished_..."/>
                <RibbonTabs active={tab} onPick={setTab}/>
            </Header>
            <Ribbon/>
            <DocTabs>
                <DocTab><span>gs_finished_map*</span><CloseTab aria-label="Zeichnung schließen">✕</CloseTab></DocTab>
                <AddDoc aria-label="Neue Zeichnung">+</AddDoc>
            </DocTabs>
            <Workspace>
                <Model>
                    <Drawing/>
                    <CommandLine/>
                </Model>
                <TaskPane/>
            </Workspace>
            <StatusBar/>
        </Frame>
    );
};

export default App;

/* ---------- styles ---------- */

const Frame = styled.div`
    display: flex; flex-direction: column;
    min-height: 100vh;
    padding: 0 3px 3px;
    border: 1px solid #2a2a2a;
    background: #5a5a5a;
`;

const IconButton = styled.button`
    display: flex; align-items: center; justify-content: center;
    gap: 6px;
    padding: 0;
    border: 0;
    background: none;
`;

const Divider = styled.span`
    width: 1px;
    height: 20px;
    background: #7c7c7c;
`;

const Header = styled.header`
    display: grid;
    grid-template-columns: 42px minmax(0, 1fr);
    grid-template-rows: 26px 21px;
    background: linear-gradient(#a2a2a2, #5e5e5e 26px, #2e2e2e 26px, #2e2e2e 28px, #525252 28px);
    margin: 0 -3px;
    padding: 0 3px;
`;

const AppButton = styled.button`
    grid-row: 1 / 3;
    display: grid; grid-template-columns: 28px 8px; align-items: center; justify-items: center;
    align-content: space-between;
    height: 41px;
    margin-top: 3px;
    padding: 2px 2px 0;
    border: 1px solid #1e1e1e;
    background: linear-gradient(#c5c5c5, #737373);
    b {
        grid-column: 1 / 3;
        font-size: 8px;
        line-height: 11px;
        color: #111;
    }
`;

const TitleRow = styled.div`
    display: flex; align-items: center;
    padding: 0 4px 0 7px;
`;

const QuickAccess = styled.div`
    display: flex; align-items: center;
    gap: 8px;
`;

const DocName = styled.span`
    flex: 1;
    padding-left: 38px;
    font-size: 12px;
    white-space: nowrap;
`;

const Search = styled.input`
    width: 180px;
    height: 22px;
    margin: 2px 4px 0 6px;
    padding: 0 2px;
    border: 1px solid #383838;
    background: #686868;
    font-style: italic;
    &::placeholder { color: #c8c8c8; opacity: 1; }
`;

const SignIn = styled.button`
    display: flex; align-items: center;
    gap: 5px;
    width: 112px;
    margin: 0 10px 0 8px;
    padding: 0;
    border: 0;
    background: none;
    font-size: 12px;
    span { flex: 1; text-align: left; }
`;

const TitleTools = styled.div`
    display: flex; align-items: center;
    gap: 9px;
`;

const HelpMark = styled.span`
    width: 16px;
    height: 16px;
    border: 2px solid #29488f;
    border-radius: 50%;
    background: #f4f6fb;
    color: #1b4aa8;
    font-weight: bold;
    line-height: 12px;
`;

const WindowButtons = styled.div`
    display: flex; align-items: center;
    gap: 8px;
    margin-left: 24px;
`;

const TabRow = styled.nav`
    display: flex; align-items: flex-end;
    gap: 2px;
    padding-left: 3px;
    & > ${IconButton} { height: 18px; margin-left: 6px; }
`;

const RibbonTab = styled.button`
    height: 18px;
    padding: 0 9px 2px;
    border: 1px solid transparent;
    border-bottom: 0;
    background: none;
    color: #d0d0d0;
    line-height: 15px;
    white-space: nowrap;
    ${({$active}) => $active && css`
        border-color: #333;
        background: linear-gradient(#757575, #606060);
        color: #fff;
    `}
`;

const RibbonBar = styled.div`
    display: flex;
    height: 101px;
    padding: 1px 1px 2px;
    border-top: 1px solid #303030;
    border-bottom: 1px solid #8a8a8a;
    background: linear-gradient(#474747, #363636);
`;

const Panel = styled.section`
    display: flex; flex-direction: column;
    width: ${({$width}) => $width}px;
    padding: 0 2px;
    border-right: 1px solid #444;
    background: linear-gradient(#606060, #565656);
`;

const PanelBody = styled.div`
    flex: 1;
    display: flex; justify-content: center;
    gap: 8px;
    padding-top: 3px;
    & > svg { align-self: center; margin-top: 32px; }
`;

const CoordBody = styled(PanelBody)`
    gap: 2px;
    padding-left: 4px;
`;

const PanelTitle = styled.h2`
    position: relative;
    margin: 0;
    height: 19px;
    background: #464646;
    font-size: 11px;
    font-weight: normal;
    line-height: 18px;
    text-align: center;
`;

const Launcher = styled(IconButton)`
    position: absolute; right: 3px; bottom: 4px;
`;

const ToolColumn = styled.div`
    display: grid; grid-auto-rows: 24px; justify-items: start;
    & + & { margin-left: 1px; }
`;

const BigButton = styled.button`
    display: flex; flex-direction: column; align-items: center;
    gap: 4px;
    width: ${({$wide}) => $wide ? 86 : 54}px;
    padding: 1px 0 0;
    border: 0;
    background: none;
    line-height: 15px;
    span { white-space: nowrap; }
`;

const FoldedPanel = styled.button`
    display: flex; flex-direction: column; align-items: center;
    width: 59px;
    margin-right: 2px;
    padding: 4px 0 5px;
    border: 0;
    background: linear-gradient(#6c6c6c, #484848);
    span { flex: 1; padding-top: 6px; }
`;

const CoordGrid = styled.div`
    display: grid;
    grid-template-columns: 24px 24px 28px 20px;
    grid-auto-rows: 24px;
    justify-items: start;
`;

const CoordSide = styled.div`
    flex: 1;
    display: grid; grid-auto-rows: 24px; justify-items: start;
    & > ${IconButton} { padding-left: 4px; }
`;

const UcsField = styled.div`
    display: flex; align-items: center;
    gap: 2px;
    width: 100%;
    height: 22px;
    padding: 0 4px 0 3px;
    border: 1px solid #303030;
    background: linear-gradient(#6a6a6a, #505050);
    select {
        flex: 1;
        appearance: none;
        padding: 0;
        border: 0;
        background: none;
    }
`;

const DocTabs = styled.div`
    display: flex; align-items: flex-end;
    height: 24px;
    margin-top: 1px;
    padding-left: 20px;
    background: #363636;
`;

const DocTab = styled.div`
    position: relative;
    display: flex; align-items: center;
    gap: 8px;
    height: 22px;
    padding: 0 13px;
    &::before, &::after {
        content: ""; position: absolute; top: 0; bottom: 0;
        width: 52%;
        background: linear-gradient(#858585, #5a5a5a);
    }
    &::before { left: 0; border-radius: 8px 0 0 0; transform: skewX(-20deg); }
    &::after { right: 0; border-radius: 0 8px 0 0; transform: skewX(20deg); }
    span { position: relative; z-index: 1; }
`;

const CloseTab = styled(IconButton)`
    position: relative; z-index: 1;
    color: #3c3c3c;
`;

const AddDoc = styled.button`
    width: 22px;
    height: 14px;
    margin: 0 0 3px 8px;
    padding: 0;
    border: 0;
    border-radius: 3px 10px 3px 10px;
    background: #5a5a5a;
    color: #ccc;
    font-size: 12px;
    font-weight: bold;
    line-height: 12px;
`;

const Workspace = styled.main`
    flex: 1;
    display: flex;
    padding-top: 3px;
`;

const Model = styled.div`
    flex: 1;
    display: flex; flex-direction: column;
    min-width: 0;
`;

const DrawingArea = styled.section`
    position: relative;
    flex: 1;
    min-height: 200px;
    background: #c1c1c1;
`;

const RoadMap = styled.svg`
    position: absolute; inset: 0;
    width: 100%;
    height: 100%;
    fill: none;
    stroke-linecap: round;
    stroke-linejoin: round;
`;

const ViewButtons = styled.div`
    position: absolute; top: 8px; right: 9px;
    display: flex;
    gap: 6px;
`;

const UcsMark = styled.div`
    position: absolute; left: 4px; bottom: 2px;
`;

const Command = styled.section`
    display: flex;
    margin-top: 2px;
    font-family: "DejaVu Sans Mono", monospace;
`;

const CommandStrip = styled.div`
    display: flex; flex-direction: column; align-items: center;
    gap: 10px;
    width: 23px;
    padding: 4px 2px 7px;
    background: linear-gradient(#6c6c6c, #3a3a3a);
`;

const Grip = styled.span`
    width: 18px;
    height: 6px;
    background: radial-gradient(#aaa 1px, transparent 1px) 0 0 / 3px 3px;
`;

const CommandMain = styled.div`
    flex: 1;
    border: 1px solid #777;
    border-width: 1px 1px 0 0;
`;

const History = styled.div`
    padding: 3px 2px;
    border-bottom: 1px solid #808080;
    background: #c8c8c8;
    color: #000;
    font-size: 12px;
    line-height: 15px;
`;

const Prompt = styled.div`
    display: flex; align-items: center;
    gap: 4px;
    height: 22px;
    padding: 0 5px;
    background: #fff;
    input {
        flex: 1;
        min-width: 0;
        padding: 0 3px;
        border: 0;
        outline: 0;
        font-size: 12px;
        font-style: italic;
        color: #000;
    }
    input::placeholder { color: #999; opacity: 1; }
`;

const Pane = styled.aside`
    display: flex;
    width: 300px;
    padding-left: 2px;
`;

const SideTabs = styled.div`
    display: flex; flex-direction: column;
    padding-top: 25px;
`;

const SideTab = styled.button`
    width: 21px;
    height: 85px;
    padding: 0;
    border: 1px solid #363636;
    border-left-width: 0;
    border-radius: 0 4px 4px 0;
    background: ${({$active}) => $active ? '#5a5a5a' : '#4d4d4d'};
    color: ${({$active}) => $active ? '#fff' : '#a0a0a0'};
    writing-mode: vertical-rl;
    transform: rotate(180deg);
    white-space: nowrap;
`;

const PaneMain = styled.div`
    flex: 1;
    display: flex; flex-direction: column;
    padding-top: 2px;
`;

const PaneHeader = styled.h2`
    display: flex; align-items: center;
    gap: 6px;
    height: 20px;
    margin: 0;
    padding: 0 5px;
    border-radius: 4px 4px 0 0;
    background: #4d4d4d;
    font-size: 11px;
    font-weight: normal;
`;

const PaneGrip = styled.span`
    width: 4px;
    height: 9px;
    border: dotted #2e2e2e;
    border-width: 0 1px;
`;

const PaneBody = styled.div`
    flex: 1;
    display: flex; flex-direction: column;
    padding: 7px 11px 16px;
`;

const MapField = styled.div`
    display: flex; align-items: center;
    gap: 1px;
    font-size: 11px;
    color: #111;
    label { padding-left: 1px; white-space: nowrap; }
    div {
        flex: 1;
        display: flex; align-items: center;
        height: 20px;
        padding-right: 4px;
        border: 1px solid #eee;
        background: linear-gradient(#f4f4f4, #d4d4d4);
    }
    select {
        flex: 1;
        min-width: 0;
        appearance: none;
        padding: 0 2px;
        border: 0;
        background: none;
    }
`;

const PaneToolbar = styled.div`
    display: flex;
    gap: 9px;
    height: 55px;
    margin-top: 9px;
    padding: 8px 6px 0;
    border: 1px solid #888;
    background: linear-gradient(#bbb, #fff 7px);
`;

const PaneTool = styled.button`
    display: flex; flex-direction: column; align-items: center;
    gap: 2px;
    padding: 0;
    border: 0;
    background: none;
    color: #222;
    font-size: 10px;
`;

const OrderRow = styled.div`
    display: flex; align-items: center;
    gap: 7px;
    margin-top: 10px;
`;

const OrderButton = styled.button`
    display: flex; align-items: center;
    gap: 5px;
    height: 28px;
    padding: 0 2px;
    border: 1px solid transparent;
    background: none;
    color: #222;
    font-size: 10px;
    ${({$active}) => $active && css`
        border-color: #999;
        background: linear-gradient(#1b9eea, #7fd0f8);
    `}
`;

const LayerList = styled.div`
    flex: 1;
    margin-top: 7px;
    padding: 4px;
    border: 1px solid #808080;
    background: #fff;
    color: #000;
`;

const LayerRow = styled.div`
    display: flex; align-items: center;
    gap: 9px;
    height: 26px;
    padding-left: ${({$child}) => $child ? 55 : 33}px;
    ${({$selected}) => $selected && css`
        height: 29px;
        margin-bottom: 2px;
        padding-bottom: 2px;
        background: #3399ff;
        color: #fff;
        svg { margin: 0 0 2px 4px; }
    `}
`;

const Expander = styled(IconButton)`
    width: 12px;
    margin-left: -21px;
`;

const BaseLabel = styled.label`
    padding-left: 51px;
    font-style: italic;
`;

const Check = styled.input`
    appearance: none;
    position: relative;
    width: 13px;
    height: 13px;
    margin: 0;
    border: 1px solid #1c5180;
    background: linear-gradient(135deg, #dcdcdc, #fff);
    &:checked::after {
        content: ""; position: absolute; left: 4px; top: 1px;
        width: 4px;
        height: 7px;
        border: solid #21a121;
        border-width: 0 2px 2px 0;
        transform: rotate(40deg);
    }
`;

const Status = styled.footer`
    display: flex;
    height: 28px;
    padding-bottom: 1px;
    margin-top: 1px;
    background: #363636;
`;

const LayoutTabs = styled.div`
    display: flex; align-items: flex-start;
    gap: 9px;
    width: 125px;
    padding-left: 11px;
    & > ${IconButton} { margin-top: 4px; }
`;

const LayoutTab = styled.button`
    width: 62px;
    height: 17px;
    padding: 0;
    border: 0;
    clip-path: polygon(0 0, 100% 0, 88% 100%, 12% 100%);
    background: linear-gradient(#5a5a5a, #808080);
    font-weight: bold;
`;

const AddLayout = styled(AddDoc)`
    width: 21px;
    margin: 1px 0 0 -3px;
    background: #4a4a4a;
`;

const StatusCell = styled.div`
    flex: ${({$grow}) => $grow ? '1 0' : '0 0'} ${({$width}) => $width}px;
    display: flex; align-items: center; justify-content: space-evenly;
    border: 1px solid #777;
    margin-right: 1px;
    background: #4b4b4b;
    &:last-child { margin-right: 0; }
`;

const StatusButton = styled.button`
    display: flex; align-items: center;
    gap: 4px;
    padding: 0;
    border: 0;
    background: none;
    font-size: 12px;
    white-space: nowrap;
`;
